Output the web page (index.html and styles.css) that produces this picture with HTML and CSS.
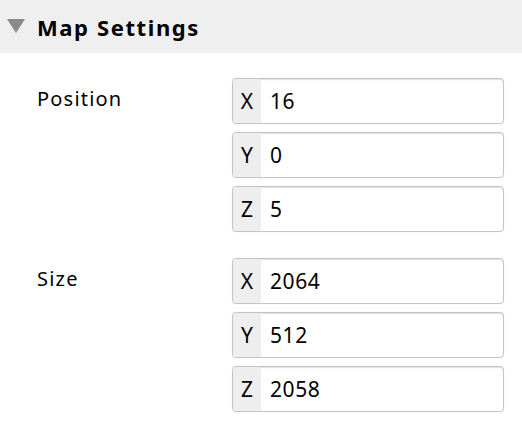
FILE: index.html
```html
<!DOCTYPE html>
<html lang="en">
<head>
    <meta charset="UTF-8">
    <meta name="viewport" content="width=device-width, initial-scale=1.0">
    <title>Map Settings</title>
    <link rel="stylesheet" href="styles.css">
</head>
<body>
    <div class="panel-head">
        <span class="arrow"></span>
        <h1>Map Settings</h1>
    </div>

    <div class="panel-body">
        <div class="prop">
            <div class="prop-name">Position</div>
            <div class="fields">
                <div class="vec"><span class="axis">X</span><input type="text" value="16"></div>
                <div class="vec"><span class="axis">Y</span><input type="text" value="0"></div>
                <div class="vec"><span class="axis">Z</span><input type="text" value="5"></div>
            </div>
        </div>
        <div class="prop">
            <div class="prop-name">Size</div>
            <div class="fields">
                <div class="vec"><span class="axis">X</span><input type="text" value="2064"></div>
                <div class="vec"><span class="axis">Y</span><input type="text" value="512"></div>
                <div class="vec"><span class="axis">Z</span><input type="text" value="2058"></div>
            </div>
        </div>
    </div>
</body>
</html>
```
FILE: styles.css
```css
body{
    margin: 0;
    background-color: #ffffff;
    font-family: "Noto Sans", "Open Sans", sans-serif;
    color: #000;
}
.panel-head{
    display: flex;
    align-items: center;
    height: 53px;
    padding-left: 7px;
    background-color: #efefef;
}
.arrow{
    width: 0;
    height: 0;
    border-left: 9px solid transparent;
    border-right: 9px solid transparent;
    border-top: 14px solid #8a8a8a;
    margin-top: -2px;
}
h1{
    margin: 0 0 0 12px;
    font-size: 22px;
    font-weight: bold;
    letter-spacing: 1.6px;
}
.panel-body{
    padding: 25px 18px 0 37px;
}
.prop{
    display: flex;
    margin-bottom: 26px;
}
.prop-name{
    flex-shrink: 0;
    width: 195px;
    font-size: 20px;
    letter-spacing: 1.2px;
    padding-top: 7px;
}
.fields{
    flex: 1;
    min-width: 0;
    display: flex;
    flex-direction: column;
    gap: 8px;
}
.vec{
    display: flex;
    height: 44px;
    border: 1px solid #c4c4c4;
    border-radius: 4px;
    box-shadow: inset 0 1px 1px rgba(0,0,0,0.12), 0 0 1px rgba(0,0,0,0.15);
    overflow: hidden;
}
.axis{
    width: 28px;
    background-color: #eeeeee;
    display: flex;
    align-items: center;
    justify-content: center;
    font-size: 21px;
}
.vec input{
    flex: 1;
    min-width: 0;
    border: none;
    outline: none;
    background: transparent;
    padding: 0 0 0 9px;
    font-family: inherit;
    font-size: 21px;
    letter-spacing: 0.6px;
    color: #000;
}
```
